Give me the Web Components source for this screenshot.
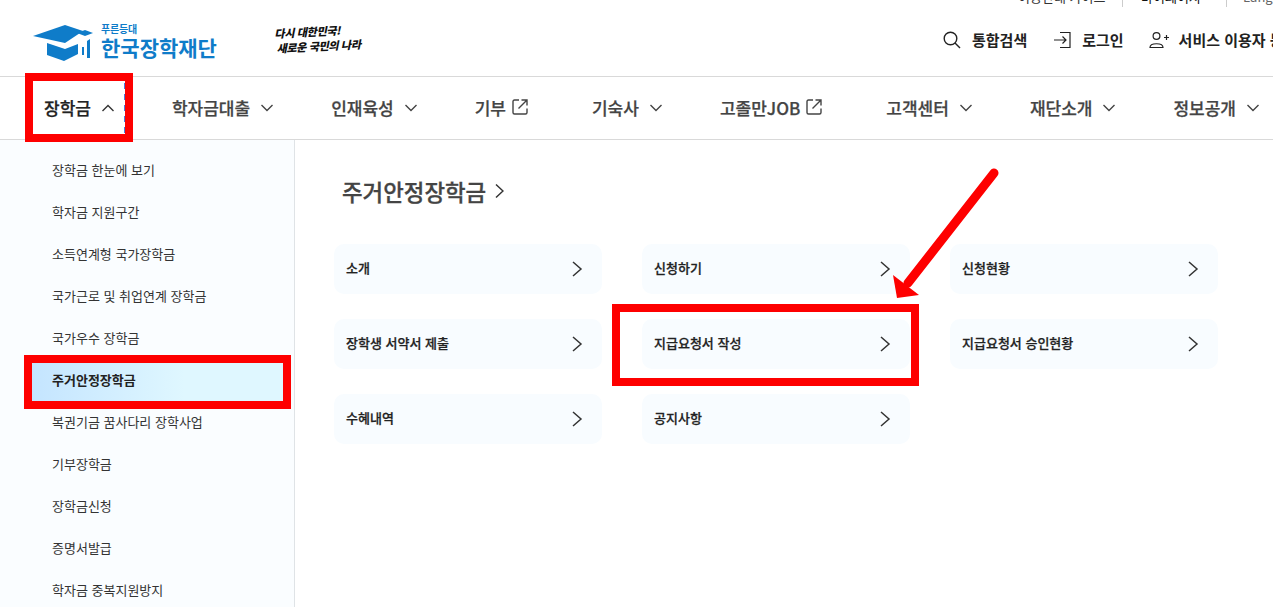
<!DOCTYPE html>
<html lang="ko">
<head>
<meta charset="utf-8">
<title>한국장학재단</title>
<style>
  html, body { margin: 0; padding: 0; background: #fff; }
  body { font-family: "Noto Sans CJK KR", "Noto Sans", sans-serif; overflow: hidden; }
</style>
</head>
<body>
<kosaf-page>
  <util-bar></util-bar>
  <site-header></site-header>
  <main-nav>
    <nav-item active focus>장학금</nav-item>
    <nav-item>학자금대출</nav-item>
    <nav-item>인재육성</nav-item>
    <nav-item external>기부</nav-item>
    <nav-item>기숙사</nav-item>
    <nav-item external>고졸만JOB</nav-item>
    <nav-item>고객센터</nav-item>
    <nav-item>재단소개</nav-item>
    <nav-item>정보공개</nav-item>
  </main-nav>
  <page-body>
    <side-menu slot="side">
      <side-item>장학금 한눈에 보기</side-item>
      <side-item>학자금 지원구간</side-item>
      <side-item>소득연계형 국가장학금</side-item>
      <side-item>국가근로 및 취업연계 장학금</side-item>
      <side-item>국가우수 장학금</side-item>
      <side-item active>주거안정장학금</side-item>
      <side-item>복권기금 꿈사다리 장학사업</side-item>
      <side-item>기부장학금</side-item>
      <side-item>장학금신청</side-item>
      <side-item>증명서발급</side-item>
      <side-item>학자금 중복지원방지</side-item>
    </side-menu>
    <content-panel heading="주거안정장학금">
      <link-card>소개</link-card>
      <link-card>신청하기</link-card>
      <link-card>신청현황</link-card>
      <link-card>장학생 서약서 제출</link-card>
      <link-card>지급요청서 작성</link-card>
      <link-card>지급요청서 승인현황</link-card>
      <link-card>수혜내역</link-card>
      <link-card>공지사항</link-card>
    </content-panel>
  </page-body>
  <mark-box style="left:25px;top:73px;width:108px;height:69px"></mark-box>
  <mark-box style="left:24px;top:355px;width:267px;height:54px"></mark-box>
  <mark-box style="left:612px;top:304px;width:307px;height:82px"></mark-box>
  <mark-arrow></mark-arrow>
</kosaf-page>

<script>
const FONT = `"Noto Sans CJK KR", "Noto Sans", sans-serif`

const CHEVRON_DOWN = `<svg width="14" height="8" viewBox="0 0 14 8" fill="none" stroke="#444" stroke-width="1.4"><path d="M1.5 1 L7 6.5 L12.5 1"/></svg>`
const CHEVRON_UP = `<svg width="14" height="8" viewBox="0 0 14 8" fill="none" stroke="#333" stroke-width="1.4"><path d="M1.5 7 L7 1.5 L12.5 7"/></svg>`
const EXTERNAL = `<svg width="16" height="16" viewBox="0 0 16 16" fill="none" stroke="#444" stroke-width="1.4"><path d="M7 1 H2.5 Q1 1 1 2.5 V13.5 Q1 15 2.5 15 H13.5 Q15 15 15 13.5 V9.5"/><path d="M6.5 9.5 L14.5 1.5 M9.5 1 H15 V6.5"/></svg>`
const CARD_ARROW = `<svg width="12" height="16" viewBox="0 0 12 16" fill="none" stroke="#333" stroke-width="1.5"><path d="M2 1 L10 8 L2 15"/></svg>`

class KosafPage extends HTMLElement {
  constructor() {
    super()
    this.attachShadow({ mode: 'open' }).innerHTML = `
      <style>
        :host { display: block; position: relative; width: 1273px; height: 607px; overflow: hidden; }
      </style>
      <slot></slot>`
  }
}

class UtilBar extends HTMLElement {
  constructor() {
    super()
    this.attachShadow({ mode: 'open' }).innerHTML = `
      <style>
        :host { display: flex; height: 8px; overflow: hidden; justify-content: flex-end; font: 400 13px/20px ${FONT}; color: #333; }
        span { display: block; height: 7px; box-sizing: border-box; overflow: hidden; }
        b { font-weight: 400; display: block; margin-top: -13px; white-space: nowrap; }
        .a { width: 120px; padding-left: 15px; border-right: 1px solid #ccc; }
        .b { width: 104px; padding-left: 18px; border-right: 1px solid #ccc; color: #111; }
        .c { width: 46px; padding-left: 16px; color: #666; }
      </style>
      <span class="a"><b>이용안내 가이드</b></span>
      <span class="b"><b>마이페이지</b></span>
      <span class="c"><b>Language</b></span>`
  }
}

class SiteHeader extends HTMLElement {
  constructor() {
    super()
    this.attachShadow({ mode: 'open' }).innerHTML = `
      <style>
        :host { display: flex; align-items: center; height: 69px; box-sizing: border-box; padding: 0 0 4px 33px; border-bottom: 1px solid #d9d9d9; white-space: nowrap; overflow: hidden; }
        .logo { flex: 0 0 241px; display: flex; align-items: center; color: #0f7cc9; margin-top: 2px; }
        .logo svg { display: block; flex: none; margin-top: 6px; }
        .names { margin-left: 6px; display: flex; flex-direction: column; }
        .names small { font: 700 10px/12px ${FONT}; letter-spacing: -.2px; }
        .names strong { font: 700 21px/25px ${FONT}; }
        .slogan { flex: 0 0 669px; margin-top: 2px; font: 900 11px/15px ${FONT}; color: #111; transform: skewX(-14deg) rotate(-3deg); transform-origin: 0 50%; letter-spacing: -.4px; }
        .slogan div:last-child { padding-left: 5px; }
        .tool { display: flex; align-items: center; font: 700 15px/20px ${FONT}; color: #222; }
        .tool svg { display: block; flex: none; }
      </style>
      <div class="logo">
        <svg width="62" height="38" viewBox="0 0 62 38">
          <g fill="#0f7cc9">
            <path d="M0 11 L32 0 L50 6 L32 18 Z"/>
            <path d="M44 8 L52 5 L60 8 L52 11 Z"/>
            <path d="M14 18 L32 24 L45 19 V29 L31 36 L14 30 Z"/>
            <path d="M49 22 H51 V30 H49 Z"/>
            <path d="M54 16 L57 14 V33 H54 Z"/>
          </g>
        </svg>
        <div class="names"><small>푸른등대</small><strong>한국장학재단</strong></div>
      </div>
      <div class="slogan"><div>다시 대한민국!</div><div>새로운 국민의 나라</div></div>
      <div class="tool">
        <svg width="18" height="18" viewBox="0 0 18 18" fill="none" stroke="#222" stroke-width="1.4"><circle cx="7.5" cy="7.5" r="6.3"/><path d="M12 12 L17 17"/></svg>
        <span style="margin-left:11px">통합검색</span>
      </div>
      <div class="tool" style="margin-left:27px">
        <svg width="18" height="18" viewBox="0 0 18 18" fill="none" stroke="#222" stroke-width="1.2"><path d="M0 9 H12 M8.5 5.5 L12 9 L8.5 12.5"/><path d="M6 1.5 H16 V16.5 H6"/></svg>
        <span style="margin-left:10px">로그인</span>
      </div>
      <div class="tool" style="margin-left:25px">
        <svg width="20" height="18" viewBox="0 0 20 18" fill="none" stroke="#222" stroke-width="1.2"><circle cx="7.5" cy="5" r="3.4"/><path d="M1 16.5 C1 11.5 14 11.5 14 16.5 Z"/><path d="M15 6.5 H20 M17.5 4 V9"/></svg>
        <span style="margin-left:10px">서비스 이용자 등록</span>
      </div>`
  }
}

class MainNav extends HTMLElement {
  constructor() {
    super()
    this.attachShadow({ mode: 'open' }).innerHTML = `
      <style>
        :host { display: flex; align-items: center; gap: 57px; height: 63px; box-sizing: border-box; padding-left: 44px; border-bottom: 1px solid #d9d9d9; white-space: nowrap; overflow: hidden; }
      </style>
      <slot></slot>`
  }
}

class NavItem extends HTMLElement {
  constructor() {
    super()
    const external = this.hasAttribute('external')
    const active = this.hasAttribute('active')
    this.attachShadow({ mode: 'open' }).innerHTML = `
      <style>
        :host { display: flex; align-items: center; flex: none; font: 500 17px/24px ${FONT}; color: ${active ? '#222' : '#444'}; -webkit-text-stroke: .25px currentColor; }
        :host([external]) { padding-right: 7px; align-items: flex-start; }
        :host([focus]) { height: 50px; padding-right: 9px; margin-right: -11px; border-right: 2px dashed #4a7fe0; }
        .ico { display: flex; margin-left: 10px; }
        :host([external]) .ico { margin-left: 6px; margin-top: 3px; }
        svg { display: block; }
      </style>
      <slot></slot>
      <span class="ico">${external ? EXTERNAL : active ? CHEVRON_UP : CHEVRON_DOWN}</span>`
  }
}

class PageBody extends HTMLElement {
  constructor() {
    super()
    this.attachShadow({ mode: 'open' }).innerHTML = `
      <style>
        :host { display: flex; height: 467px; }
      </style>
      <slot name="side"></slot>
      <slot></slot>`
  }
}

class SideMenu extends HTMLElement {
  constructor() {
    super()
    this.attachShadow({ mode: 'open' }).innerHTML = `
      <style>
        :host { display: flex; flex-direction: column; flex: 0 0 295px; box-sizing: border-box; padding: 9px 3px 0 24px; background: #fafdff; border-right: 1px solid #dfe3e6; overflow: hidden; }
      </style>
      <slot></slot>`
  }
}

class SideItem extends HTMLElement {
  constructor() {
    super()
    this.attachShadow({ mode: 'open' }).innerHTML = `
      <style>
        :host { display: flex; align-items: center; flex: none; height: 42px; padding-left: 28px; font: 400 13px/20px ${FONT}; color: #333; white-space: nowrap; }
        :host([active]) { font-weight: 700; color: #222; background: linear-gradient(90deg, #c3e4ff, #dff7ff 60%); }
      </style>
      <slot></slot>`
  }
}

class ContentPanel extends HTMLElement {
  constructor() {
    super()
    this.attachShadow({ mode: 'open' }).innerHTML = `
      <style>
        :host { display: block; padding: 35px 0 0 39px; }
        h2 { display: flex; align-items: center; gap: 9px; margin: 0 0 37px 8px; height: 32px; font: 500 22.4px/32px ${FONT}; color: #444; -webkit-text-stroke: .3px currentColor; }
        .grid { display: grid; grid-template-columns: repeat(3, 268px); column-gap: 40px; row-gap: 25px; }
      </style>
      <h2><span>${this.getAttribute('heading')}</span>
        <svg width="9" height="16" viewBox="0 0 9 16" fill="none" stroke="#333" stroke-width="1.5"><path d="M1 1.5 L8 8 L1 14.5"/></svg>
      </h2>
      <div class="grid"><slot></slot></div>`
  }
}

class LinkCard extends HTMLElement {
  constructor() {
    super()
    this.attachShadow({ mode: 'open' }).innerHTML = `
      <style>
        :host { display: flex; align-items: center; justify-content: space-between; height: 50px; box-sizing: border-box; padding: 0 19px 2px 12px; background: #f8fcff; border-radius: 10px; font: 500 13px/20px ${FONT}; color: #222; -webkit-text-stroke: .25px currentColor; }
        svg { display: block; margin-top: 2px; }
      </style>
      <slot></slot>${CARD_ARROW}`
  }
}

// red annotation drawn over the screenshot
class MarkBox extends HTMLElement {
  constructor() {
    super()
    this.attachShadow({ mode: 'open' }).innerHTML = `
      <style>
        :host { display: block; position: absolute; box-sizing: border-box; border: 8px solid #fe0000; }
      </style>`
  }
}

class MarkArrow extends HTMLElement {
  constructor() {
    super()
    this.attachShadow({ mode: 'open' }).innerHTML = `
      <style>
        :host { display: block; position: absolute; left: 0; top: 0; width: 1273px; height: 607px; pointer-events: none; }
        svg { display: block; }
      </style>
      <svg width="1273" height="607" viewBox="0 0 1273 607">
        <path d="M994 173 L908 283" stroke="#fe0000" stroke-width="9" stroke-linecap="round" fill="none"/>
        <path d="M893 275 L897 298 L919 295 Z" fill="#fe0000"/>
      </svg>`
  }
}

customElements.define('kosaf-page', KosafPage)
customElements.define('util-bar', UtilBar)
customElements.define('site-header', SiteHeader)
customElements.define('main-nav', MainNav)
customElements.define('nav-item', NavItem)
customElements.define('page-body', PageBody)
customElements.define('side-menu', SideMenu)
customElements.define('side-item', SideItem)
customElements.define('content-panel', ContentPanel)
customElements.define('link-card', LinkCard)
customElements.define('mark-box', MarkBox)
customElements.define('mark-arrow', MarkArrow)
</script>
</body>
</html>
